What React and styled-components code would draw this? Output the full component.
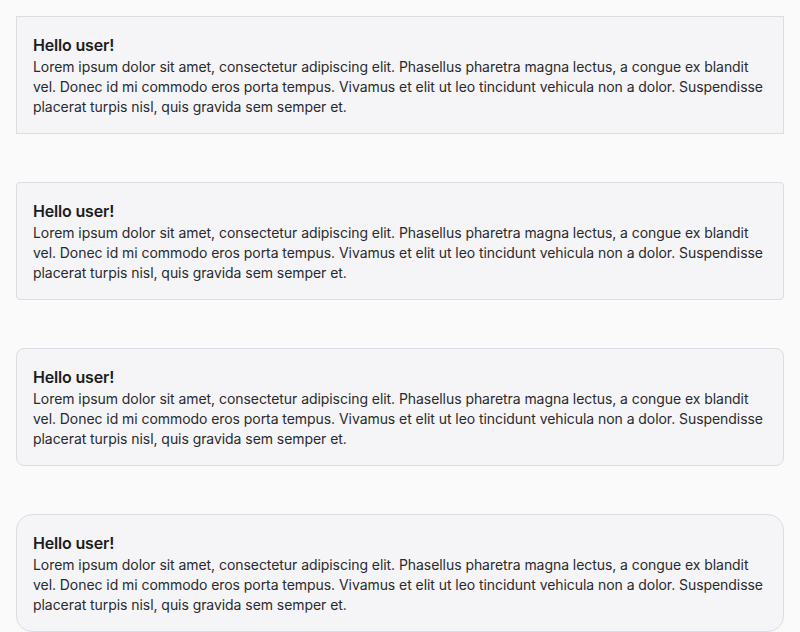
import React from "react";
import styled, { createGlobalStyle } from "styled-components";

const Global = createGlobalStyle`
  html, body { margin: 0; padding: 0; background: #fafafa; }
  body { font-family: Inter, "Noto Sans", sans-serif; color: #27272a; }
`;

const Page = styled.div`
  display: flex;
  flex-direction: column;
  gap: 48px;
  padding: 16px;
`;

const Card = styled.section`
  background: #f5f5f7;
  border: 1px solid #dcdce3;
  border-radius: ${(p) => p.$radius}px;
  padding: 16px;
`;

const Title = styled.h2`
  margin: 0;
  font-size: 16px;
  line-height: 24px;
  font-weight: 600;
  letter-spacing: -0.18px;
  color: #1c1c1f;
`;

const Body = styled.p`
  margin: 0;
  font-size: 14px;
  line-height: 20px;
  letter-spacing: -0.06px;
  color: #2a2a2e;
`;

const text =
  "Lorem ipsum dolor sit amet, consectetur adipiscing elit. Phasellus pharetra magna lectus, a congue ex blandit vel. Donec id mi commodo eros porta tempus. Vivamus et elit ut leo tincidunt vehicula non a dolor. Suspendisse placerat turpis nisl, quis gravida sem semper et.";

export default function App() {
  return (
    <>
      <Global />
      <Page>
        {[0, 4, 8, 16].map((r) => (
          <Card key={r} $radius={r}>
            <Title>Hello user!</Title>
            <Body>{text}</Body>
          </Card>
        ))}
      </Page>
    </>
  );
}
